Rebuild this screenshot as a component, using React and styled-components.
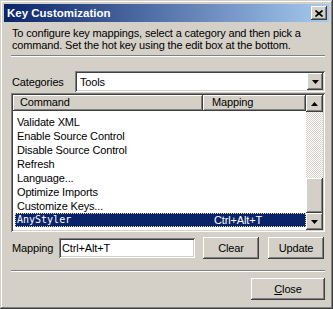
import React from "react";
import styled, { createGlobalStyle } from "styled-components";

const GlobalStyle = createGlobalStyle`
  body {
    margin: 0;
    background: #d4d0c8;
  }
  * {
    box-sizing: border-box;
  }
`;

const raised = `
  box-shadow: inset -1px -1px #404040, inset 1px 1px #fff,
    inset -2px -2px #808080, inset 2px 2px #d4d0c8;
`;

const sunken = `
  box-shadow: inset 1px 1px #808080, inset -1px -1px #fff,
    inset 2px 2px #404040, inset -2px -2px #d4d0c8;
`;

const commands = [
  { name: "Validate XML" },
  { name: "Enable Source Control" },
  { name: "Disable Source Control" },
  { name: "Refresh" },
  { name: "Language..." },
  { name: "Optimize Imports" },
  { name: "Customize Keys..." },
  { name: "AnyStyler", key: "Ctrl+Alt+T", selected: true, mono: true },
];

const Arrow = ({ up }) => (
  <svg width="7" height="4" viewBox="0 0 7 4">
    <polygon points={up ? "3.5,0 7,4 0,4" : "0,0 7,0 3.5,4"} fill="#000" />
  </svg>
);

const App = () => {
  return (
    <>
      <GlobalStyle />
      <Window>
        <TitleBar>
          <TitleText>Key Customization</TitleText>
          <CaptionButton>
            <svg width="8" height="7" viewBox="0 0 8 7">
              <path d="M0.5 0.5 L7.5 6.5 M7.5 0.5 L0.5 6.5" stroke="#000" strokeWidth="1.7" />
            </svg>
          </CaptionButton>
        </TitleBar>
        <Body>
          <Intro>
            To configure key mappings, select a category and then pick a
            <br />
            command. Set the hot key using the edit box at the bottom.
          </Intro>
          <Etched $top={4} />
          <CategoryRow>
            <Label $width={64}>Categories</Label>
            <Combo>
              <ComboText>Tools</ComboText>
              <DropButton>
                <Arrow />
              </DropButton>
            </Combo>
          </CategoryRow>
          <ListBox>
            <ListMain>
              <Header>
                <HeaderCell $width={190} $pad={7}>Command</HeaderCell>
                <HeaderCell $pad={9}>Mapping</HeaderCell>
              </Header>
              <Rows>
                {commands.map((c) => (
                  <Row key={c.name} $selected={c.selected}>
                    <Name $mono={c.mono}>{c.name}</Name>
                    <span>{c.key}</span>
                  </Row>
                ))}
              </Rows>
            </ListMain>
            <ScrollBar>
              <ScrollButton>
                <Arrow up />
              </ScrollButton>
              <Track>
                <Thumb />
              </Track>
              <ScrollButton>
                <Arrow />
              </ScrollButton>
            </ScrollBar>
          </ListBox>
          <MappingRow>
            <Label $width={48}>Mapping</Label>
            <EditBox>Ctrl+Alt+T</EditBox>
            <Button $width={56} $left={8}>Clear</Button>
            <Button $width={56} $left={9}>Update</Button>
          </MappingRow>
          <Etched $top={11} />
          <Footer>
            <Button $width={74}>
              <u>C</u>lose
            </Button>
          </Footer>
        </Body>
      </Window>
    </>
  );
};

export default App;

const Window = styled.div`
  width: 333px;
  height: 309px;
  padding: 4px;
  display: flex;
  flex-direction: column;
  background: #d4d0c8;
  box-shadow: inset -1px -1px #404040, inset 1px 1px #d4d0c8,
    inset -2px -2px #808080, inset 2px 2px #fff;
  font-family: "Liberation Sans", Arial, sans-serif;
  font-size: 11px;
  letter-spacing: -0.15px;
  color: #000;
`;

const TitleBar = styled.div`
  height: 18px;
  display: flex;
  align-items: center;
  justify-content: space-between;
  padding: 0 2px;
  background: linear-gradient(90deg, #0a246a, #a6caf0);
`;

const TitleText = styled.span`
  color: #fff;
  font-weight: bold;
  font-size: 11.5px;
  letter-spacing: 0;
  padding-left: 1px;
`;

const CaptionButton = styled.div`
  width: 16px;
  height: 14px;
  display: flex;
  align-items: center;
  justify-content: center;
  background: #d4d0c8;
  ${raised};
`;

const Body = styled.div`
  flex: 1;
  display: flex;
  flex-direction: column;
  padding: 0 4px 0 7px;
`;

const Intro = styled.div`
  margin: 5px 0 0 1px;
  line-height: 12px;
  white-space: nowrap;
`;

const Etched = styled.div`
  height: 2px;
  margin-top: ${(p) => p.$top}px;
  border-top: 1px solid #808080;
  border-bottom: 1px solid #fff;
`;

const CategoryRow = styled.div`
  margin-top: 14px;
  height: 21px;
  display: flex;
  align-items: center;
`;

const Label = styled.span`
  width: ${(p) => p.$width}px;
  padding-left: 1px;
  flex-shrink: 0;
`;

const Combo = styled.div`
  flex: 1;
  height: 21px;
  padding: 2px;
  display: flex;
  align-items: center;
  background: #fff;
  ${sunken};
`;

const ComboText = styled.span`
  flex: 1;
  padding-left: 3px;
`;

const DropButton = styled.div`
  width: 16px;
  height: 17px;
  display: flex;
  align-items: center;
  justify-content: center;
  background: #d4d0c8;
  ${raised};
`;

const ListBox = styled.div`
  margin-top: 1px;
  height: 139px;
  padding: 2px;
  display: flex;
  background: #fff;
  ${sunken};
`;

const ListMain = styled.div`
  flex: 1;
  min-width: 0;
  display: flex;
  flex-direction: column;
  overflow: hidden;
`;

const Header = styled.div`
  height: 16px;
  display: flex;
  flex-shrink: 0;
`;

const HeaderCell = styled.div`
  ${(p) => (p.$width ? `width: ${p.$width}px;` : "flex: 1;")}
  padding-left: ${(p) => p.$pad}px;
  line-height: 15px;
  background: #d4d0c8;
  box-shadow: inset -1px -1px #404040, inset 1px 1px #fff,
    inset -2px -2px #808080;
`;

const Rows = styled.div`
  padding: 4px 0 0 2px;
`;

const Row = styled.div`
  height: 14px;
  line-height: 14px;
  padding-left: 2px;
  display: grid;
  grid-template-columns: 197px 1fr;
  background: ${(p) => (p.$selected ? "#0a246a" : "transparent")};
  color: ${(p) => (p.$selected ? "#fff" : "#000")};
  outline: ${(p) => (p.$selected ? "1px dotted #e8d890" : "none")};
  outline-offset: -1px;
  white-space: nowrap;
`;

const Name = styled.span`
  font-family: ${(p) =>
    p.$mono ? `"DejaVu Sans Mono", "Liberation Mono", monospace` : "inherit"};
  font-size: ${(p) => (p.$mono ? "10px" : "inherit")};
  letter-spacing: ${(p) => (p.$mono ? "0" : "inherit")};
`;

const ScrollBar = styled.div`
  width: 17px;
  display: flex;
  flex-direction: column;
`;

const ScrollButton = styled.div`
  height: 17px;
  flex-shrink: 0;
  display: flex;
  align-items: center;
  justify-content: center;
  background: #d4d0c8;
  ${raised};
`;

const Track = styled.div`
  flex: 1;
  display: flex;
  flex-direction: column;
  justify-content: flex-end;
  background-image: conic-gradient(
    #fff 90deg,
    #d4d0c8 90deg 180deg,
    #fff 180deg 270deg,
    #d4d0c8 270deg
  );
  background-size: 2px 2px;
`;

const Thumb = styled.div`
  height: 35px;
  background: #d4d0c8;
  ${raised};
`;

const MappingRow = styled.div`
  margin-top: 5px;
  height: 22px;
  display: flex;
  align-items: center;
`;

const EditBox = styled.div`
  width: 136px;
  height: 20px;
  padding: 0 3px;
  line-height: 20px;
  background: #fff;
  ${sunken};
`;

const Button = styled.div`
  width: ${(p) => p.$width}px;
  height: 22px;
  margin-left: ${(p) => p.$left || 0}px;
  display: flex;
  align-items: center;
  justify-content: center;
  background: #d4d0c8;
  ${raised};

  u {
    text-decoration: underline;
  }
`;

const Footer = styled.div`
  margin-top: 6px;
  display: flex;
  justify-content: flex-end;
`;
